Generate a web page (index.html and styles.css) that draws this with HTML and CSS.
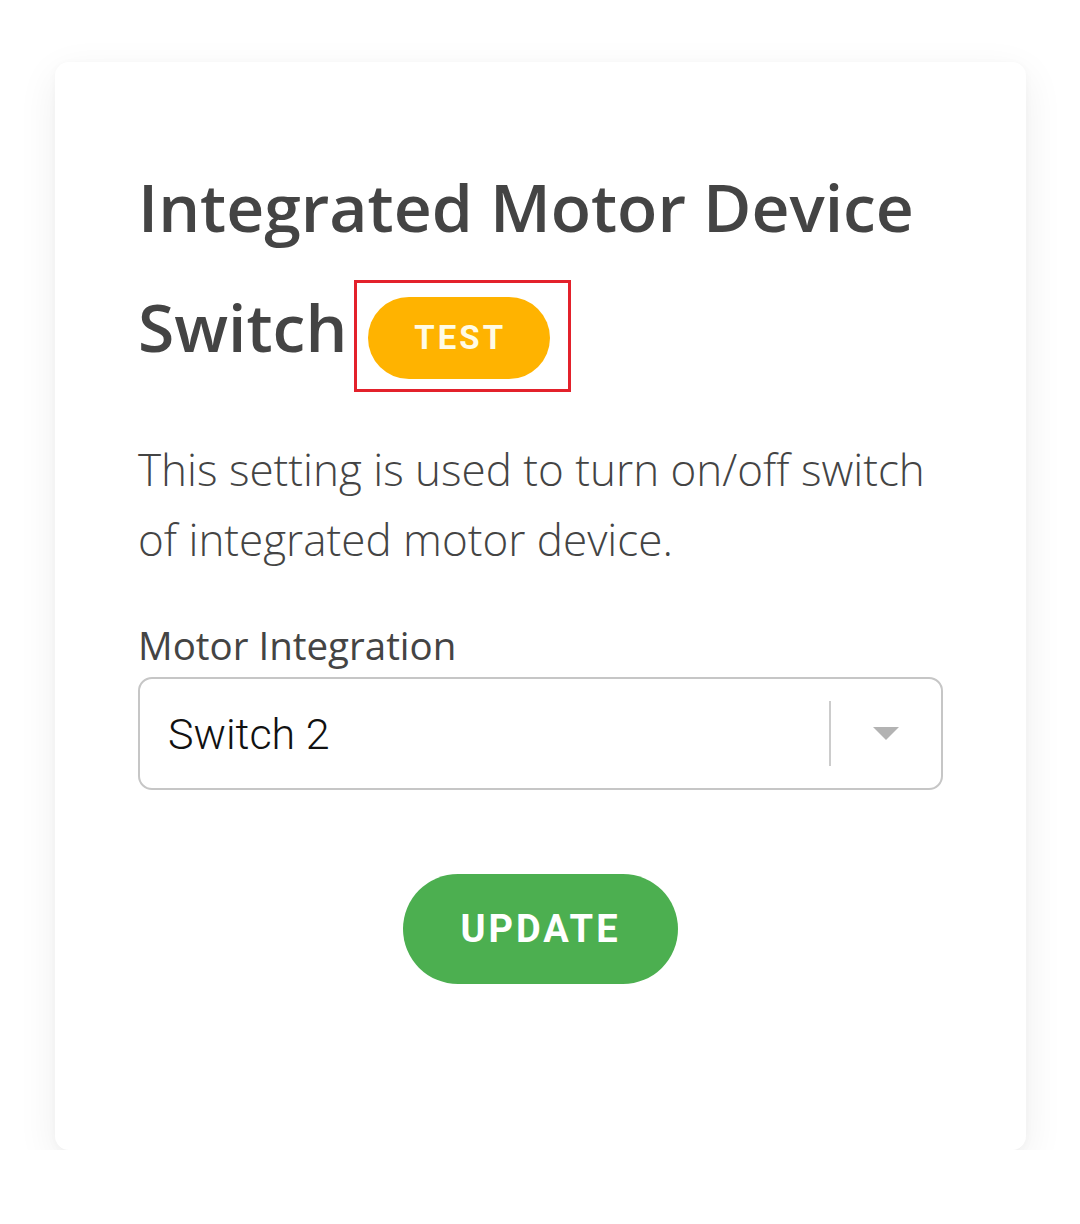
FILE: index.html
```html
<!DOCTYPE html>
<html lang="en">
<head>
<meta charset="utf-8">
<title>Integrated Motor Device Switch</title>
<link rel="stylesheet" href="styles.css">
</head>
<body>
<main class="card">
  <h1 class="title">Integrated Motor Device Switch<span class="badge-wrap"><span class="badge">TEST</span></span></h1>
  <p class="desc">This setting is used to turn on/off switch of integrated motor device.</p>
  <label class="label">Motor Integration</label>
  <div class="select">
    <span class="select-value">Switch 2</span>
    <span class="select-sep"></span>
    <span class="select-arrow"></span>
  </div>
  <div class="actions">
    <button class="btn">UPDATE</button>
  </div>
</main>
</body>
</html>
```

FILE: styles.css
```css
html, body {
  margin: 0;
  padding: 0;
  background: #ffffff;
}
body {
  font-family: "Open Sans", "Noto Sans", sans-serif;
  color: #444444;
  padding-top: 62px;
}
.card {
  box-sizing: border-box;
  margin: 0 54px 0 55px;
  height: 1088px;
  background: #ffffff;
  border-radius: 14px;
  box-shadow: 0 12px 40px rgba(0, 0, 0, 0.07), 0 2px 10px rgba(0, 0, 0, 0.03);
  padding: 84px 83px 0 83px;
  display: flex;
  flex-direction: column;
}
.title {
  margin: 0;
  font-size: 66px;
  font-weight: 600;
  line-height: 120px;
  color: #444444;
}
.badge-wrap {
  position: relative;
  display: inline-block;
  line-height: 82px;
  margin-left: 21px;
  vertical-align: -12px;
}
.badge {
  display: inline-block;
  height: 82px;
  line-height: 82px;
  padding: 0 44px 0 46px;
  border-radius: 41px;
  background: #ffb300;
  color: #fffbe6;
  font-family: Roboto, "Noto Sans", sans-serif;
  font-weight: 700;
  font-size: 33px;
  letter-spacing: 3px;
  vertical-align: top;
}
.badge-wrap::after {
  content: "";
  position: absolute;
  left: -14px;
  right: -21px;
  top: -17px;
  bottom: -13px;
  border: 3px solid #e3212b;
}
.desc {
  margin: 48px 0 0;
  font-size: 44px;
  font-weight: 300;
  line-height: 70px;
  color: #444444;
}
.label {
  margin-top: 44px;
  font-size: 38.5px;
  font-weight: 400;
  line-height: 54px;
  color: #444444;
}
.select {
  margin-top: 5px;
  box-sizing: border-box;
  height: 113px;
  flex: 0 0 113px;
  border: 2px solid #c6c6c6;
  border-radius: 14px;
  display: flex;
  align-items: center;
  padding: 0 42px 0 28px;
}
.select-value {
  flex: 1;
  font-family: Roboto, "Noto Sans", sans-serif;
  font-weight: 300;
  font-size: 43px;
  color: #111111;
}
.select-sep {
  width: 2px;
  height: 65px;
  background: #cccccc;
}
.select-arrow {
  margin-left: 42px;
  width: 0;
  height: 0;
  border-left: 13px solid transparent;
  border-right: 13px solid transparent;
  border-top: 13px solid #b3b3b3;
}
.actions {
  margin-top: 84px;
  display: flex;
  justify-content: center;
}
.btn {
  width: 275px;
  height: 110px;
  border: none;
  border-radius: 55px;
  background: #4caf50;
  color: #ffffff;
  font-family: Roboto, "Noto Sans", sans-serif;
  font-weight: 700;
  font-size: 38px;
  letter-spacing: 3px;
  padding: 0;
}
```
